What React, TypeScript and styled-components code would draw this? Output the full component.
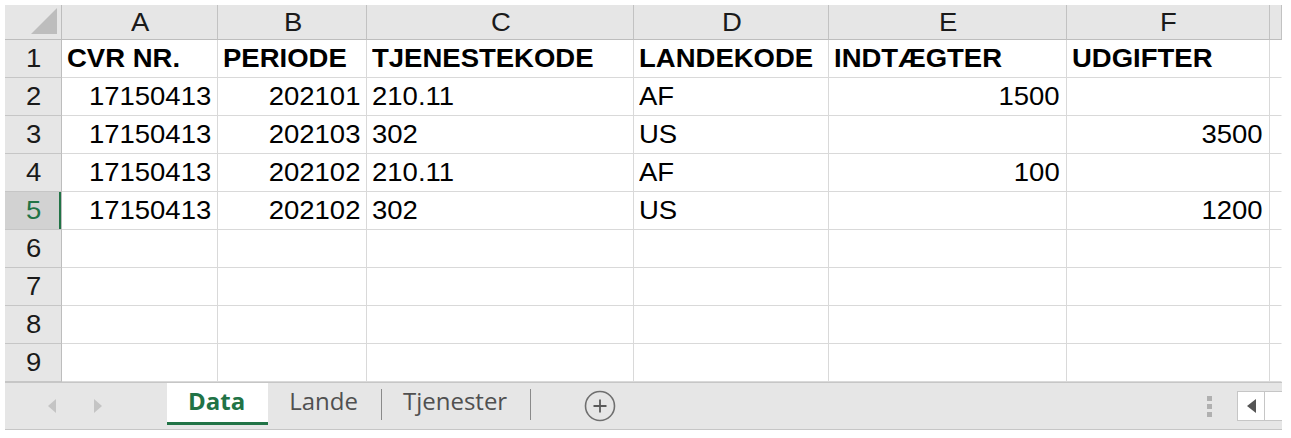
import styled, { createGlobalStyle } from "styled-components";
import { FC } from "react";

const GlobalStyle = createGlobalStyle`
body {
    margin: 0;
    background: #ffffff;
}
`

const green = `#217346`;

const columns = [`A`, `B`, `C`, `D`, `E`, `F`];
const headings = [`CVR NR.`, `PERIODE`, `TJENESTEKODE`, `LANDEKODE`, `INDTÆGTER`, `UDGIFTER`];

type Value = string | number;

const rows: Value[][] = [
    [17150413, 202101, `210.11`, `AF`, 1500, ``],
    [17150413, 202103, `302`, `US`, ``, 3500],
    [17150413, 202102, `210.11`, `AF`, 100, ``],
    [17150413, 202102, `302`, `US`, ``, 1200],
    [``, ``, ``, ``, ``, ``],
    [``, ``, ``, ``, ``, ``],
    [``, ``, ``, ``, ``, ``],
    [``, ``, ``, ``, ``, ``],
];

const activeRow = 5;
const tabs = [`Data`, `Lande`, `Tjenester`];

const App: FC = () =>
    <>
        <GlobalStyle />
        <Page>
            <Sheet>
                <Corner>
                    <svg width="26" height="26" viewBox="0 0 26 26">
                        <polygon points="26,0 26,26 0,26" fill="#bdbdbd" />
                    </svg>
                </Corner>
                {columns.map(c =>
                    <ColHeader key={c}><CellText>{c}</CellText></ColHeader>
                )}
                <ColHeader />

                <RowHeader><CellText>1</CellText></RowHeader>
                {headings.map(h =>
                    <Cell key={h}><CellText $bold>{h}</CellText></Cell>
                )}
                <Cell $edge />

                {rows.map((row, i) => {
                    const n = i + 2;
                    return [
                        <RowHeader key={`h${n}`} $active={n === activeRow}>
                            <CellText>{n}</CellText>
                        </RowHeader>,
                        ...row.map((v, j) => {
                            const right = typeof v === `number`;
                            return (
                                <Cell key={`${n}-${j}`} $right={right}>
                                    <CellText $right={right}>{v}</CellText>
                                </Cell>
                            );
                        }),
                        <Cell key={`e${n}`} $edge />
                    ];
                })}
            </Sheet>

            <TabBar>
                <NavArea>
                    <svg width="8" height="14" viewBox="0 0 8 14">
                        <polygon points="8,0 8,14 0,7" fill="#c4c4c4" />
                    </svg>
                    <svg width="8" height="14" viewBox="0 0 8 14">
                        <polygon points="0,0 0,14 8,7" fill="#c4c4c4" />
                    </svg>
                </NavArea>
                {tabs.map((t, i) =>
                    <TabGroup key={t}>
                        <Tab $active={i === 0}>{t}</Tab>
                        {i > 0 && <Divider />}
                    </TabGroup>
                )}
                <AddButton>
                    <svg width="32" height="32" viewBox="0 0 32 32">
                        <circle cx="16" cy="16" r="14.5" fill="none" stroke="#6f6f6f" strokeWidth="1.6" />
                        <path d="M16 9.5v13M9.5 16h13" stroke="#5a5a5a" strokeWidth="1.8" />
                    </svg>
                </AddButton>
                <ScrollArea>
                    <Grip>
                        <i /><i /><i />
                    </Grip>
                    <ScrollButton>
                        <svg width="9" height="14" viewBox="0 0 9 14">
                            <polygon points="9,0 9,14 0,7" fill="#555555" />
                        </svg>
                    </ScrollButton>
                    <ScrollTrack />
                </ScrollArea>
            </TabBar>
        </Page>
    </>

export default App;

const Page = styled.div`
padding: 5px 0 0 5px;
width: 1277px;
height: 433px;
font-family: "Liberation Sans", Arial, sans-serif;
color: #000000;
`

const Sheet = styled.div`
display: grid;
grid-template-columns: 57px 156px 149px 267px 195px 238px 203px 12px;
grid-template-rows: 35px repeat(9, 38px);
`

const HeaderBase = styled.div`
box-sizing: border-box;
display: flex;
align-items: center;
justify-content: center;
background: #e6e6e6;
font-size: 25px;
color: #1a1a1a;
`

const Corner = styled(HeaderBase)`
justify-content: flex-end;
align-items: flex-end;
padding: 0 4px 5px 0;
border-right: 1px solid #bdbdbd;
border-bottom: 1px solid #bdbdbd;
`

const ColHeader = styled(HeaderBase)`
border-right: 1px solid #c2c2c2;
border-bottom: 1px solid #bdbdbd;
`

const RowHeader = styled(HeaderBase)<{ $active?: boolean }>`
border-right: 1px solid #bdbdbd;
border-bottom: 1px solid #c6c6c6;
background: ${p => p.$active ? `#d2d2d2` : `#e6e6e6`};
color: ${p => p.$active ? green : `#1a1a1a`};
box-shadow: ${p => p.$active ? `inset -2px 0 0 ${green}` : `none`};
`

const Cell = styled.div<{ $right?: boolean; $edge?: boolean }>`
box-sizing: border-box;
display: flex;
align-items: center;
justify-content: ${p => p.$right ? `flex-end` : `flex-start`};
padding: 0 6px 0 5px;
border-right: 1px solid ${p => p.$edge ? `transparent` : `#d9d9d9`};
border-bottom: 1px solid #d9d9d9;
white-space: nowrap;
font-size: 25px;
`

const CellText = styled.span<{ $bold?: boolean; $right?: boolean }>`
display: inline-block;
font-weight: ${p => p.$bold ? 700 : 400};
transform: scaleX(1.1);
transform-origin: ${p => p.$right ? `right` : `left`} center;
line-height: 1;
`

const TabBar = styled.div`
display: flex;
align-items: flex-start;
height: 46px;
background: #e6e6e6;
border-top: 1px solid #c6c6c6;
border-bottom: 1px solid #c6c6c6;
font-family: "Open Sans", "Noto Sans", sans-serif;
`

const NavArea = styled.div`
display: flex;
align-items: center;
gap: 38px;
width: 162px;
height: 46px;
padding-left: 43px;
box-sizing: border-box;
`

const TabGroup = styled.div`
display: flex;
align-items: center;
height: 46px;
`

const Tab = styled.div<{ $active?: boolean }>`
box-sizing: border-box;
display: flex;
align-items: center;
height: 42px;
align-self: flex-start;
padding: 0 23px 4px 21px;
font-size: 24px;
line-height: 1;
font-weight: ${p => p.$active ? 700 : 400};
color: ${p => p.$active ? green : `#505050`};
background: ${p => p.$active ? `#ffffff` : `transparent`};
border-bottom: 3px solid ${p => p.$active ? green : `transparent`};
`

const Divider = styled.div`
width: 1px;
height: 31px;
margin-top: -4px;
background: #8a8a8a;
`

const AddButton = styled.div`
display: flex;
align-items: center;
height: 46px;
margin-left: 53px;
`

const ScrollArea = styled.div`
display: flex;
align-items: center;
height: 46px;
margin-left: auto;
`

const Grip = styled.div`
display: flex;
flex-direction: column;
gap: 3px;
margin-right: 25px;
i {
    display: block;
    width: 5px;
    height: 5px;
    background: #b0b0b0;
}
`

const ScrollButton = styled.div`
box-sizing: border-box;
display: flex;
align-items: center;
justify-content: center;
width: 28px;
height: 30px;
background: #ffffff;
border: 1px solid #c6c6c6;
`

const ScrollTrack = styled.div`
box-sizing: border-box;
width: 17px;
height: 30px;
background: #ffffff;
border-top: 1px solid #c6c6c6;
border-bottom: 1px solid #c6c6c6;
`
